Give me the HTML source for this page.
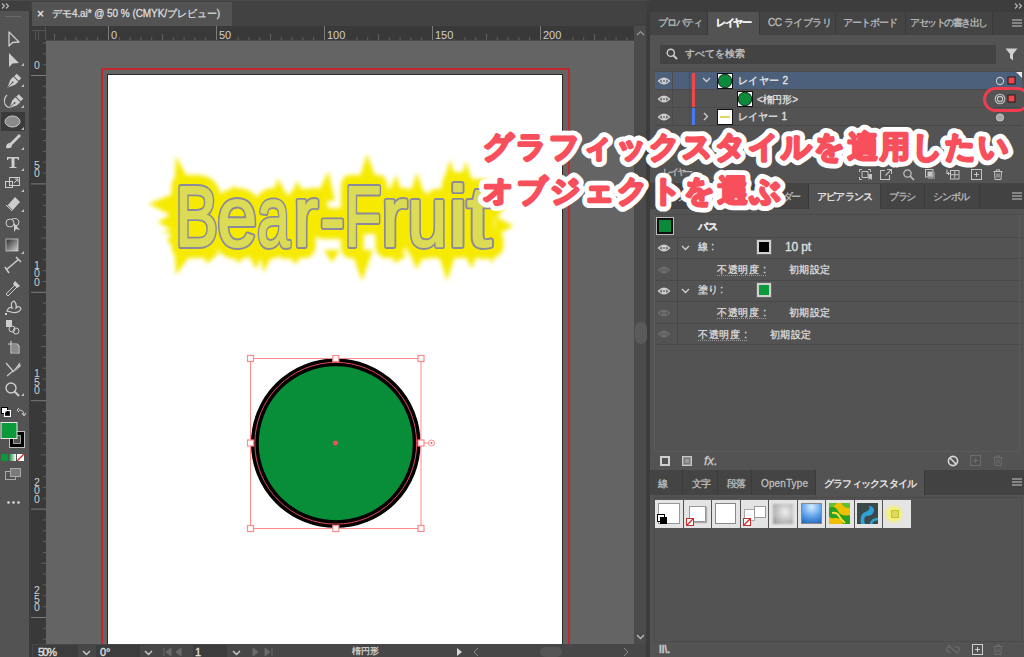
<!DOCTYPE html><html lang="ja"><head><meta charset="utf-8"><style>
*{margin:0;padding:0;box-sizing:border-box}
html,body{width:1024px;height:657px;overflow:hidden;background:#535353;font-family:"Liberation Sans",sans-serif;color:#d8d8d8}
.a{position:absolute}
.t{position:absolute;white-space:nowrap;font-size:11px;line-height:12px;-webkit-text-stroke:0.3px currentColor}
</style></head><body>
<div class="a" style="left:0;top:0;width:1024px;height:12px;background:#3f3f3f"></div>
<div class="a" style="left:0;top:0;width:1024px;height:1px;background:#4a4a4a"></div>
<div class="a" style="left:30px;top:1px;width:616px;height:25px;background:#424242"></div>
<div class="a" style="left:32px;top:2px;width:200px;height:24px;background:#535353"></div>
<div class="t" style="left:37px;top:7px;font-size:12px;line-height:14px;color:#e8e8e8">&#215;</div>
<div class="t" style="left:52px;top:8px;font-size:10px;line-height:12px;color:#dcdcdc;letter-spacing:-0.06px">デモ4.ai* @ 50 % (CMYK/プレビュー)</div>
<div class="a" style="left:0;top:11px;width:29px;height:646px;background:#535353"></div>
<div class="a" style="left:29px;top:11px;width:3px;height:646px;background:#3a3a3a"></div>
<svg class="a" style="left:0;top:0" width="30" height="657" viewBox="0 0 30 657"><path d="M5 16.5H21" stroke="#6a6a6a" stroke-width="1"/><rect x="1" y="112" width="24" height="19" fill="#3a3a3a"/><path d="M9 32L9 46L12.5 42.5L19 42Z" fill="none" stroke="#cdcdcd" stroke-width="1.3" stroke-linejoin="round"/><path d="M9 53L9 67L12.5 63.5L19 63Z" fill="#cdcdcd"/><g transform="translate(13,82) rotate(45)"><rect x="-3.2" y="-8.5" width="6.4" height="3.6" fill="#cdcdcd"/><path d="M-3.6 -4L3.6 -4L3.4 0.5L0 8L-3.4 0.5Z" fill="#cdcdcd"/><path d="M0 0.5V7.5" stroke="#535353" stroke-width="0.9"/><circle cx="0" cy="0.5" r="0.9" fill="#535353"/></g><g transform="translate(15,102.5) rotate(45)"><rect x="-3.2" y="-8.5" width="6.4" height="3.6" fill="#cdcdcd"/><path d="M-3.6 -4L3.6 -4L3.4 0.5L0 8L-3.4 0.5Z" fill="#cdcdcd"/><path d="M0 0.5V7.5" stroke="#535353" stroke-width="0.9"/><circle cx="0" cy="0.5" r="0.9" fill="#535353"/></g><path d="M7 95Q3 99 5 104Q7 108 10 107" fill="none" stroke="#cdcdcd" stroke-width="1.1"/><ellipse cx="12.5" cy="121.5" rx="7.5" ry="5.5" fill="#8a8a8a" stroke="#cdcdcd" stroke-width="1"/><path d="M6 148Q6 143 10 143L19 134L21 136L12 145Q12 149 6 148Z" fill="#cdcdcd"/><path d="M7 157H19V160H18L17.5 158.5H14.5V167H16.5V168H9.5V167H11.5V158.5H8.5L8 160H7Z" fill="#cdcdcd"/><rect x="5.5" y="181.5" width="7" height="6" fill="none" stroke="#cdcdcd"/><rect x="9.5" y="177.5" width="10" height="8" fill="none" stroke="#cdcdcd"/><path d="M15 179H18V182M18 179L14 183" fill="none" stroke="#cdcdcd"/><path d="M7 206L15 197L20 202L12 211Z" fill="#cdcdcd"/><path d="M7 206L12 211" stroke="#535353" stroke-width="2"/><path d="M6 205L12 211" stroke="#cdcdcd" stroke-width="1"/><circle cx="10" cy="223" r="4" fill="none" stroke="#cdcdcd"/><path d="M12 219Q18 217 19 222Q19 226 15 226" fill="none" stroke="#cdcdcd"/><path d="M14 223L20 230L16 229L14 232Z" fill="#cdcdcd"/><defs><linearGradient id="tg" x1="0" y1="0" x2="1" y2="1"><stop offset="0" stop-color="#2a2a2a"/><stop offset="1" stop-color="#cfcfcf"/></linearGradient></defs><rect x="6" y="239" width="12" height="12" fill="url(#tg)" stroke="#cdcdcd" stroke-width="0.8"/><path d="M6 270L19 259M5 267L9 273M16 257L21 262" stroke="#cdcdcd" stroke-width="1.5"/><path d="M6 294L15 285L17 287L8 296Z" fill="none" stroke="#cdcdcd"/><path d="M15 281L20 286L17 288L13 284Z" fill="#cdcdcd"/><path d="M7 311Q9 306 12 308Q10 302 14 301Q17 304 16 308Q20 305 21 309Q18 314 11 312Z" fill="none" stroke="#cdcdcd" stroke-width="1.2"/><path d="M5 313h2v2h-2z" fill="#cdcdcd"/><rect x="6" y="320" width="6" height="7" fill="#cdcdcd"/><circle cx="12" cy="329" r="3" fill="none" stroke="#cdcdcd"/><circle cx="16" cy="331" r="3" fill="none" stroke="#cdcdcd"/><path d="M11 341V353H19V346L17 344H11M8 344H14" fill="none" stroke="#cdcdcd" stroke-width="1.2"/><rect x="12" y="345" width="6" height="7" fill="#8a8a8a"/><path d="M6 363L13 371L7 376M20 363L13 372" fill="none" stroke="#cdcdcd" stroke-width="1.2"/><path d="M14 372L20 364L21 366Z" fill="#cdcdcd"/><circle cx="11" cy="388" r="5" fill="none" stroke="#cdcdcd" stroke-width="1.4"/><path d="M14.5 391.5L19 396" stroke="#cdcdcd" stroke-width="2"/><path d="M24 66H21L24 63Z" fill="#bdbdbd"/><path d="M24 87H21L24 84Z" fill="#bdbdbd"/><path d="M24 108H21L24 105Z" fill="#bdbdbd"/><path d="M24 130H21L24 127Z" fill="#bdbdbd"/><path d="M24 150H21L24 147Z" fill="#bdbdbd"/><path d="M24 171H21L24 168Z" fill="#bdbdbd"/><path d="M24 192H21L24 189Z" fill="#bdbdbd"/><path d="M24 212H21L24 209Z" fill="#bdbdbd"/><path d="M24 254H21L24 251Z" fill="#bdbdbd"/><path d="M24 396H21L24 393Z" fill="#bdbdbd"/><rect x="1.5" y="407.5" width="6" height="6" fill="#fff" stroke="#000"/><rect x="4.5" y="410.5" width="6" height="6" fill="none" stroke="#fff"/><rect x="5.5" y="411.5" width="4" height="4" fill="#000"/><path d="M19 410Q24 410 24 415M22 413L24 416L26 413M19 408L17 410L19 412" fill="none" stroke="#cdcdcd" stroke-width="1"/><rect x="9.5" y="431.5" width="15" height="16" fill="#000" stroke="#bdbdbd"/><rect x="13.5" y="435.5" width="7" height="8" fill="#535353" stroke="#bdbdbd" stroke-width="0.8"/><rect x="1" y="422.5" width="16" height="16" fill="#0a9a3a" stroke="#e8e8e8"/><rect x="1" y="454" width="7" height="7" fill="#0a9a3a"/><defs><linearGradient id="tg2"><stop offset="0" stop-color="#0a8a3a"/><stop offset="1" stop-color="#fff"/></linearGradient></defs><rect x="9" y="454" width="7" height="7" fill="url(#tg2)"/><rect x="17" y="454" width="7" height="7" fill="#fff"/><path d="M17 461L24 454" stroke="#e02020" stroke-width="1.3"/><rect x="5.5" y="471.5" width="10" height="8" fill="none" stroke="#aaa"/><rect x="10.5" y="468.5" width="10" height="8" fill="#7a7a7a" stroke="#aaa"/><circle cx="8.5" cy="502.5" r="1.3" fill="#ddd"/><circle cx="13.5" cy="502.5" r="1.3" fill="#ddd"/><circle cx="18.5" cy="502.5" r="1.3" fill="#ddd"/></svg>
<div class="a" style="left:32px;top:26px;width:602px;height:14px;background:#393939"></div>
<div class="a" style="left:31px;top:26px;width:15px;height:618px;background:#393939"></div>
<div class="a" style="left:46px;top:40px;width:588px;height:604px;background:#646464"></div>
<div class="a" style="left:101px;top:68px;width:469px;height:590px;border:2px solid #c0282e;border-bottom:none"></div>
<div class="a" style="left:107px;top:74px;width:456px;height:590px;background:#fff;border:1px solid #2a2a2a;border-bottom:none"></div>
<svg class="a" style="left:0;top:0" width="1024" height="657" viewBox="0 0 1024 657"><defs><filter id="bl" x="-20%" y="-50%" width="140%" height="200%"><feGaussianBlur stdDeviation="2.1"/></filter></defs><g filter="url(#bl)" fill="#f6ea00"><g stroke="#f6ea00" stroke-width="24" stroke-linejoin="round"><text transform="translate(175.22,0) scale(0.755,1)" x="0" y="246.5" font-family="Liberation Sans" font-size="85">B</text><text transform="translate(217.16,0) scale(0.841,1)" x="0" y="246.5" font-family="Liberation Sans" font-size="85">e</text><text transform="translate(257.31,0) scale(0.688,1)" x="0" y="246.5" font-family="Liberation Sans" font-size="85">a</text><text transform="translate(293.36,0) scale(0.880,1)" x="0" y="246.5" font-family="Liberation Sans" font-size="85">r</text><text transform="translate(320.12,0) scale(0.880,1)" x="0" y="246.5" font-family="Liberation Sans" font-size="85">-</text><text transform="translate(344.44,0) scale(0.711,1)" x="0" y="246.5" font-family="Liberation Sans" font-size="85">F</text><text transform="translate(381.24,0) scale(0.920,1)" x="0" y="246.5" font-family="Liberation Sans" font-size="85">r</text><text transform="translate(407.48,0) scale(0.840,1)" x="0" y="246.5" font-family="Liberation Sans" font-size="85">u</text><text transform="translate(448.52,0) scale(0.992,1)" x="0" y="246.5" font-family="Liberation Sans" font-size="85">i</text><text transform="translate(467.04,0) scale(1.040,1)" x="0" y="246.5" font-family="Liberation Sans" font-size="85">t</text></g><path d="M195.7 192.5L175.8 155.9L174.3 197.5Z M175.5 193.0L148.6 203.8L174.5 217.0Z M175.0 212.0L157.8 222.0L175.0 232.0Z M175.4 229.4L166.5 241.4L180.6 246.6Z M174.5 241.8L175.8 274.9L195.5 248.2Z M200.3 247.6L206.6 263.8L219.7 252.4Z M247.0 252.5L256.1 269.2L263.0 251.5Z M259.0 251.2L263.7 272.7L273.0 252.8Z M286.0 252.0L295.0 264.6L304.0 252.0Z M243.0 200.0L234.0 185.1L225.0 200.0Z M289.0 199.1L277.7 178.2L271.0 200.9Z M306.0 199.5L296.9 180.4L290.0 200.5Z M334.9 201.2L328.4 171.2L315.1 198.8Z M381.0 191.6L366.9 154.1L355.0 192.4Z M404.0 200.4L396.1 174.7L386.0 199.6Z M426.0 200.0L417.0 172.4L408.0 200.0Z M460.0 192.0L450.0 159.8L440.0 192.0Z M475.0 192.0L466.0 160.9L457.0 192.0Z M493.9 217.8L505.8 206.6L490.1 202.2Z M495.0 236.0L513.4 226.0L495.0 216.0Z M482.0 243.9L492.3 263.7L498.0 242.1Z M324.0 250.0L332.0 262.6L340.0 250.0Z M351.0 250.0L362.0 281.1L373.0 250.0Z M408.0 250.0L417.0 269.6L426.0 250.0Z M437.0 250.0L447.0 281.1L457.0 250.0Z M190.0 226.0L161.2 232.0L190.0 238.0Z M392.8 248.4L394.2 263.5L407.2 255.6Z M462.1 251.0L472.3 268.4L477.9 249.0Z M232.2 250.4L237.7 263.5L247.8 253.6Z M358.0 200.0L350.0 182.8L342.0 200.0Z"/></g><g fill="#8a8a96" stroke="#8a8a9a" stroke-width="5.8" stroke-linejoin="round"><text transform="translate(175.22,0) scale(0.755,1)" x="0" y="246.5" font-family="Liberation Sans" font-size="85">B</text><text transform="translate(217.16,0) scale(0.841,1)" x="0" y="246.5" font-family="Liberation Sans" font-size="85">e</text><text transform="translate(257.31,0) scale(0.688,1)" x="0" y="246.5" font-family="Liberation Sans" font-size="85">a</text><text transform="translate(293.36,0) scale(0.880,1)" x="0" y="246.5" font-family="Liberation Sans" font-size="85">r</text><text transform="translate(320.12,0) scale(0.880,1)" x="0" y="246.5" font-family="Liberation Sans" font-size="85">-</text><text transform="translate(344.44,0) scale(0.711,1)" x="0" y="246.5" font-family="Liberation Sans" font-size="85">F</text><text transform="translate(381.24,0) scale(0.920,1)" x="0" y="246.5" font-family="Liberation Sans" font-size="85">r</text><text transform="translate(407.48,0) scale(0.840,1)" x="0" y="246.5" font-family="Liberation Sans" font-size="85">u</text><text transform="translate(448.52,0) scale(0.992,1)" x="0" y="246.5" font-family="Liberation Sans" font-size="85">i</text><text transform="translate(467.04,0) scale(1.040,1)" x="0" y="246.5" font-family="Liberation Sans" font-size="85">t</text></g><g fill="#dcdb55" stroke="#dcdb55" stroke-width="2.0" stroke-linejoin="round"><text transform="translate(175.22,0) scale(0.755,1)" x="0" y="246.5" font-family="Liberation Sans" font-size="85">B</text><text transform="translate(217.16,0) scale(0.841,1)" x="0" y="246.5" font-family="Liberation Sans" font-size="85">e</text><text transform="translate(257.31,0) scale(0.688,1)" x="0" y="246.5" font-family="Liberation Sans" font-size="85">a</text><text transform="translate(293.36,0) scale(0.880,1)" x="0" y="246.5" font-family="Liberation Sans" font-size="85">r</text><text transform="translate(320.12,0) scale(0.880,1)" x="0" y="246.5" font-family="Liberation Sans" font-size="85">-</text><text transform="translate(344.44,0) scale(0.711,1)" x="0" y="246.5" font-family="Liberation Sans" font-size="85">F</text><text transform="translate(381.24,0) scale(0.920,1)" x="0" y="246.5" font-family="Liberation Sans" font-size="85">r</text><text transform="translate(407.48,0) scale(0.840,1)" x="0" y="246.5" font-family="Liberation Sans" font-size="85">u</text><text transform="translate(448.52,0) scale(0.992,1)" x="0" y="246.5" font-family="Liberation Sans" font-size="85">i</text><text transform="translate(467.04,0) scale(1.040,1)" x="0" y="246.5" font-family="Liberation Sans" font-size="85">t</text></g><circle cx="335.75" cy="443.25" r="80.9" fill="#088e38" stroke="#000" stroke-width="7.8"/><circle cx="335.75" cy="443.25" r="80.9" fill="none" stroke="#e04a55" stroke-width="1"/><rect x="250.5" y="358.5" width="170.5" height="170" fill="none" stroke="#ff8a8a" stroke-width="1"/><circle cx="335.5" cy="443" r="2.5" fill="#f0505a"/><line x1="421" y1="443" x2="428" y2="443" stroke="#ff8a8a" stroke-width="1"/><circle cx="431.5" cy="443" r="3" fill="#fff" stroke="#ff8a8a" stroke-width="1"/><circle cx="431.5" cy="443" r="1" fill="#f0505a"/>
<rect x="247.5" y="355.5" width="6" height="6" fill="#fff" stroke="#ff8a8a" stroke-width="1.2"/>
<rect x="332.8" y="355.5" width="6" height="6" fill="#fff" stroke="#ff8a8a" stroke-width="1.2"/>
<rect x="418.0" y="355.5" width="6" height="6" fill="#fff" stroke="#ff8a8a" stroke-width="1.2"/>
<rect x="247.5" y="440.0" width="6" height="6" fill="#fff" stroke="#ff8a8a" stroke-width="1.2"/>
<rect x="418.0" y="440.0" width="6" height="6" fill="#fff" stroke="#ff8a8a" stroke-width="1.2"/>
<rect x="247.5" y="525.5" width="6" height="6" fill="#fff" stroke="#ff8a8a" stroke-width="1.2"/>
<rect x="332.8" y="525.5" width="6" height="6" fill="#fff" stroke="#ff8a8a" stroke-width="1.2"/>
<rect x="418.0" y="525.5" width="6" height="6" fill="#fff" stroke="#ff8a8a" stroke-width="1.2"/>
</svg>
<svg class="a" style="left:0;top:0" width="1024" height="657" viewBox="0 0 1024 657"><path d="M54.5 34V40" stroke="#606060" stroke-width="1"/><path d="M65.3 37V40" stroke="#606060" stroke-width="1"/><path d="M76.1 37V40" stroke="#606060" stroke-width="1"/><path d="M86.9 37V40" stroke="#606060" stroke-width="1"/><path d="M97.7 37V40" stroke="#606060" stroke-width="1"/><path d="M108.5 26V40" stroke="#7c7c7c" stroke-width="1"/><path d="M119.3 37V40" stroke="#606060" stroke-width="1"/><path d="M130.1 37V40" stroke="#606060" stroke-width="1"/><path d="M140.9 37V40" stroke="#606060" stroke-width="1"/><path d="M151.7 37V40" stroke="#606060" stroke-width="1"/><path d="M162.5 34V40" stroke="#606060" stroke-width="1"/><path d="M173.3 37V40" stroke="#606060" stroke-width="1"/><path d="M184.1 37V40" stroke="#606060" stroke-width="1"/><path d="M194.9 37V40" stroke="#606060" stroke-width="1"/><path d="M205.7 37V40" stroke="#606060" stroke-width="1"/><path d="M216.5 26V40" stroke="#7c7c7c" stroke-width="1"/><path d="M227.3 37V40" stroke="#606060" stroke-width="1"/><path d="M238.1 37V40" stroke="#606060" stroke-width="1"/><path d="M248.9 37V40" stroke="#606060" stroke-width="1"/><path d="M259.7 37V40" stroke="#606060" stroke-width="1"/><path d="M270.5 34V40" stroke="#606060" stroke-width="1"/><path d="M281.3 37V40" stroke="#606060" stroke-width="1"/><path d="M292.1 37V40" stroke="#606060" stroke-width="1"/><path d="M302.9 37V40" stroke="#606060" stroke-width="1"/><path d="M313.7 37V40" stroke="#606060" stroke-width="1"/><path d="M324.5 26V40" stroke="#7c7c7c" stroke-width="1"/><path d="M335.3 37V40" stroke="#606060" stroke-width="1"/><path d="M346.1 37V40" stroke="#606060" stroke-width="1"/><path d="M356.9 37V40" stroke="#606060" stroke-width="1"/><path d="M367.7 37V40" stroke="#606060" stroke-width="1"/><path d="M378.5 34V40" stroke="#606060" stroke-width="1"/><path d="M389.3 37V40" stroke="#606060" stroke-width="1"/><path d="M400.1 37V40" stroke="#606060" stroke-width="1"/><path d="M410.9 37V40" stroke="#606060" stroke-width="1"/><path d="M421.7 37V40" stroke="#606060" stroke-width="1"/><path d="M432.5 26V40" stroke="#7c7c7c" stroke-width="1"/><path d="M443.3 37V40" stroke="#606060" stroke-width="1"/><path d="M454.1 37V40" stroke="#606060" stroke-width="1"/><path d="M464.9 37V40" stroke="#606060" stroke-width="1"/><path d="M475.7 37V40" stroke="#606060" stroke-width="1"/><path d="M486.5 34V40" stroke="#606060" stroke-width="1"/><path d="M497.3 37V40" stroke="#606060" stroke-width="1"/><path d="M508.1 37V40" stroke="#606060" stroke-width="1"/><path d="M518.9 37V40" stroke="#606060" stroke-width="1"/><path d="M529.7 37V40" stroke="#606060" stroke-width="1"/><path d="M540.5 26V40" stroke="#7c7c7c" stroke-width="1"/><path d="M551.3 37V40" stroke="#606060" stroke-width="1"/><path d="M562.1 37V40" stroke="#606060" stroke-width="1"/><path d="M572.9 37V40" stroke="#606060" stroke-width="1"/><path d="M583.7 37V40" stroke="#606060" stroke-width="1"/><path d="M594.5 34V40" stroke="#606060" stroke-width="1"/><path d="M605.3 37V40" stroke="#606060" stroke-width="1"/><path d="M616.1 37V40" stroke="#606060" stroke-width="1"/><path d="M626.9 37V40" stroke="#606060" stroke-width="1"/><rect x="109.5" y="28" width="9" height="11" fill="#393939"/><text x="111.0" y="39" font-size="11" fill="#cfcfcf" font-family="Liberation Sans">0</text><rect x="217.5" y="28" width="16" height="11" fill="#393939"/><text x="219.0" y="39" font-size="11" fill="#cfcfcf" font-family="Liberation Sans">50</text><rect x="325.5" y="28" width="23" height="11" fill="#393939"/><text x="327.0" y="39" font-size="11" fill="#cfcfcf" font-family="Liberation Sans">100</text><rect x="433.5" y="28" width="23" height="11" fill="#393939"/><text x="435.0" y="39" font-size="11" fill="#cfcfcf" font-family="Liberation Sans">150</text><rect x="541.5" y="28" width="23" height="11" fill="#393939"/><text x="543.0" y="39" font-size="11" fill="#cfcfcf" font-family="Liberation Sans">200</text><path d="M43 43.0H46" stroke="#606060" stroke-width="1"/><path d="M43 53.8H46" stroke="#606060" stroke-width="1"/><path d="M43 64.7H46" stroke="#606060" stroke-width="1"/><path d="M31 75.5H46" stroke="#7c7c7c" stroke-width="1"/><path d="M43 86.3H46" stroke="#606060" stroke-width="1"/><path d="M43 97.2H46" stroke="#606060" stroke-width="1"/><path d="M43 108.0H46" stroke="#606060" stroke-width="1"/><path d="M43 118.9H46" stroke="#606060" stroke-width="1"/><path d="M41 129.7H46" stroke="#606060" stroke-width="1"/><path d="M43 140.5H46" stroke="#606060" stroke-width="1"/><path d="M43 151.4H46" stroke="#606060" stroke-width="1"/><path d="M43 162.2H46" stroke="#606060" stroke-width="1"/><path d="M43 173.1H46" stroke="#606060" stroke-width="1"/><path d="M31 183.9H46" stroke="#7c7c7c" stroke-width="1"/><path d="M43 194.7H46" stroke="#606060" stroke-width="1"/><path d="M43 205.6H46" stroke="#606060" stroke-width="1"/><path d="M43 216.4H46" stroke="#606060" stroke-width="1"/><path d="M43 227.3H46" stroke="#606060" stroke-width="1"/><path d="M41 238.1H46" stroke="#606060" stroke-width="1"/><path d="M43 248.9H46" stroke="#606060" stroke-width="1"/><path d="M43 259.8H46" stroke="#606060" stroke-width="1"/><path d="M43 270.6H46" stroke="#606060" stroke-width="1"/><path d="M43 281.5H46" stroke="#606060" stroke-width="1"/><path d="M31 292.3H46" stroke="#7c7c7c" stroke-width="1"/><path d="M43 303.1H46" stroke="#606060" stroke-width="1"/><path d="M43 314.0H46" stroke="#606060" stroke-width="1"/><path d="M43 324.8H46" stroke="#606060" stroke-width="1"/><path d="M43 335.7H46" stroke="#606060" stroke-width="1"/><path d="M41 346.5H46" stroke="#606060" stroke-width="1"/><path d="M43 357.3H46" stroke="#606060" stroke-width="1"/><path d="M43 368.2H46" stroke="#606060" stroke-width="1"/><path d="M43 379.0H46" stroke="#606060" stroke-width="1"/><path d="M43 389.9H46" stroke="#606060" stroke-width="1"/><path d="M31 400.7H46" stroke="#7c7c7c" stroke-width="1"/><path d="M43 411.5H46" stroke="#606060" stroke-width="1"/><path d="M43 422.4H46" stroke="#606060" stroke-width="1"/><path d="M43 433.2H46" stroke="#606060" stroke-width="1"/><path d="M43 444.1H46" stroke="#606060" stroke-width="1"/><path d="M41 454.9H46" stroke="#606060" stroke-width="1"/><path d="M43 465.7H46" stroke="#606060" stroke-width="1"/><path d="M43 476.6H46" stroke="#606060" stroke-width="1"/><path d="M43 487.4H46" stroke="#606060" stroke-width="1"/><path d="M43 498.3H46" stroke="#606060" stroke-width="1"/><path d="M31 509.1H46" stroke="#7c7c7c" stroke-width="1"/><path d="M43 519.9H46" stroke="#606060" stroke-width="1"/><path d="M43 530.8H46" stroke="#606060" stroke-width="1"/><path d="M43 541.6H46" stroke="#606060" stroke-width="1"/><path d="M43 552.5H46" stroke="#606060" stroke-width="1"/><path d="M41 563.3H46" stroke="#606060" stroke-width="1"/><path d="M43 574.1H46" stroke="#606060" stroke-width="1"/><path d="M43 585.0H46" stroke="#606060" stroke-width="1"/><path d="M43 595.8H46" stroke="#606060" stroke-width="1"/><path d="M43 606.7H46" stroke="#606060" stroke-width="1"/><path d="M31 617.5H46" stroke="#7c7c7c" stroke-width="1"/><path d="M43 628.3H46" stroke="#606060" stroke-width="1"/><path d="M43 639.2H46" stroke="#606060" stroke-width="1"/><rect x="33" y="60.0" width="8" height="10.5" fill="#393939"/><text x="34" y="69.0" font-size="10.5" fill="#cfcfcf" font-family="Liberation Sans">0</text><rect x="33" y="159.9" width="8" height="19.0" fill="#393939"/><text x="34" y="168.9" font-size="10.5" fill="#cfcfcf" font-family="Liberation Sans">5</text><text x="34" y="177.4" font-size="10.5" fill="#cfcfcf" font-family="Liberation Sans">0</text><rect x="33" y="259.8" width="8" height="27.5" fill="#393939"/><text x="34" y="268.8" font-size="10.5" fill="#cfcfcf" font-family="Liberation Sans">1</text><text x="34" y="277.3" font-size="10.5" fill="#cfcfcf" font-family="Liberation Sans">0</text><text x="34" y="285.8" font-size="10.5" fill="#cfcfcf" font-family="Liberation Sans">0</text><rect x="33" y="368.2" width="8" height="27.5" fill="#393939"/><text x="34" y="377.2" font-size="10.5" fill="#cfcfcf" font-family="Liberation Sans">1</text><text x="34" y="385.7" font-size="10.5" fill="#cfcfcf" font-family="Liberation Sans">5</text><text x="34" y="394.2" font-size="10.5" fill="#cfcfcf" font-family="Liberation Sans">0</text><rect x="33" y="476.6" width="8" height="27.5" fill="#393939"/><text x="34" y="485.6" font-size="10.5" fill="#cfcfcf" font-family="Liberation Sans">2</text><text x="34" y="494.1" font-size="10.5" fill="#cfcfcf" font-family="Liberation Sans">0</text><text x="34" y="502.6" font-size="10.5" fill="#cfcfcf" font-family="Liberation Sans">0</text><rect x="33" y="585.0" width="8" height="27.5" fill="#393939"/><text x="34" y="594.0" font-size="10.5" fill="#cfcfcf" font-family="Liberation Sans">2</text><text x="34" y="602.5" font-size="10.5" fill="#cfcfcf" font-family="Liberation Sans">5</text><text x="34" y="611.0" font-size="10.5" fill="#cfcfcf" font-family="Liberation Sans">0</text><path d="M46 40.5H634" stroke="#4a4a4a"/><path d="M32 30.5H45M45.5 27V40M35.5 31V40M38.5 31V40" stroke="#555"/></svg>
<div class="a" style="left:634px;top:26px;width:14px;height:618px;background:#4b4b4b"></div>
<div class="a" style="left:646px;top:11px;width:4px;height:646px;background:#3c3c3c"></div>
<div class="a" style="left:32px;top:644px;width:614px;height:13px;background:#474747"></div>
<div class="a" style="left:33px;top:645px;width:45px;height:12px;background:#3c3c3c"></div>
<div class="t" style="left:38px;top:646px;font-size:11px;line-height:13px;color:#e0e0e0;letter-spacing:-1.52px">50%</div>
<div class="a" style="left:96px;top:645px;width:44px;height:12px;background:#3c3c3c"></div>
<div class="t" style="left:100px;top:646px;font-size:11px;line-height:13px;color:#e0e0e0">0°</div>
<div class="a" style="left:193px;top:645px;width:34px;height:12px;background:#3c3c3c"></div>
<div class="t" style="left:195px;top:646px;font-size:11px;line-height:13px;color:#e0e0e0">1</div>
<svg class="a" style="left:82px;top:650px" width="9" height="6" viewBox="0 0 9 6"><path d="M1 1L4.5 4.5L8 1" fill="none" stroke="#d0d0d0" stroke-width="1.3"/></svg>
<svg class="a" style="left:144px;top:650px" width="9" height="6" viewBox="0 0 9 6"><path d="M1 1L4.5 4.5L8 1" fill="none" stroke="#d0d0d0" stroke-width="1.3"/></svg>
<svg class="a" style="left:232px;top:650px" width="9" height="6" viewBox="0 0 9 6"><path d="M1 1L4.5 4.5L8 1" fill="none" stroke="#d0d0d0" stroke-width="1.3"/></svg>
<svg class="a" style="left:636px;top:634px" width="9" height="6" viewBox="0 0 9 6"><path d="M1 1L4.5 4.5L8 1" fill="none" stroke="#bbb" stroke-width="1.3"/></svg>
<svg class="a" style="left:160px;top:647px" width="120" height="10" viewBox="0 0 120 10"><path d="M4 1V9M11 1L6 5L11 9Z M21 1L16 5L21 9Z" fill="#6a6a6a" stroke="#6a6a6a" stroke-width="1"/><path d="M93 1L98 5L93 9Z M105 1L110 5L105 9ZM112 1V9" fill="#6a6a6a" stroke="#6a6a6a" stroke-width="1"/></svg>
<div class="t" style="left:352px;top:646px;font-size:9px;line-height:11px;color:#cfcfcf">楕円形</div>
<svg class="a" style="left:456px;top:647px" width="40" height="10" viewBox="0 0 40 10"><path d="M1 1L6 5L1 9Z" fill="#d8d8d8"/><path d="M22 1L18 5L22 9" fill="none" stroke="#888" stroke-width="1"/></svg>
<div class="a" style="left:540px;top:647px;width:22px;height:10px;background:#555;border-radius:5px"></div>
<svg class="a" style="left:622px;top:647px" width="10" height="10" viewBox="0 0 10 10"><path d="M2 1L6 5L2 9" fill="none" stroke="#888" stroke-width="1"/></svg>
<svg class="a" style="left:636px;top:30px" width="9" height="6" viewBox="0 0 9 6"><path d="M1 5L4.5 1.5L8 5" fill="none" stroke="#999" stroke-width="1.2"/></svg>
<div class="a" style="left:635px;top:322px;width:12px;height:22px;background:#5a5a5a;border-radius:6px"></div>
<div class="a" style="left:650px;top:11px;width:374px;height:646px;background:#535353"></div>
<div class="a" style="left:650px;top:0;width:374px;height:12px;background:#3d3d3d"></div>
<svg class="a" style="left:1014px;top:3px" width="9" height="6" viewBox="0 0 9 6"><path d="M1 0.5L3.5 3L1 5.5M5 0.5L7.5 3L5 5.5" fill="none" stroke="#bbb" stroke-width="1.1"/></svg>
<svg class="a" style="left:1px;top:3px" width="9" height="6" viewBox="0 0 9 6"><path d="M1 0.5L3.5 3L1 5.5M5 0.5L7.5 3L5 5.5" fill="none" stroke="#bbb" stroke-width="1.1"/></svg>
<div class="a" style="left:650px;top:12px;width:374px;height:23px;background:#424242"></div>
<div class="a" style="left:651px;top:12px;width:57px;height:23px;background:#444444;border-right:1px solid #3a3a3a"></div>
<div class="t" style="left:658px;top:17px;font-size:10px;line-height:12px;color:#bdbdbd;letter-spacing:-1.25px">プロパティ</div>
<div class="a" style="left:708px;top:12px;width:52px;height:23px;background:#535353;border-right:1px solid #3a3a3a"></div>
<div class="t" style="left:716px;top:17px;font-size:10px;line-height:12px;color:#f0f0f0;font-weight:bold;letter-spacing:-1.33px">レイヤー</div>
<div class="a" style="left:760px;top:12px;width:76px;height:23px;background:#444444;border-right:1px solid #3a3a3a"></div>
<div class="t" style="left:768px;top:17px;font-size:10px;line-height:12px;color:#bdbdbd;letter-spacing:-0.46px">CC ライブラリ</div>
<div class="a" style="left:836px;top:12px;width:70px;height:23px;background:#444444;border-right:1px solid #3a3a3a"></div>
<div class="t" style="left:843px;top:17px;font-size:10px;line-height:12px;color:#bdbdbd;letter-spacing:-1.00px">アートボード</div>
<div class="a" style="left:906px;top:12px;width:87px;height:23px;background:#444444;border-right:1px solid #3a3a3a"></div>
<div class="t" style="left:910px;top:17px;font-size:10px;line-height:12px;color:#bdbdbd;letter-spacing:-1.50px">アセットの書き出し</div>
<svg class="a" style="left:1012px;top:19px" width="10" height="8" viewBox="0 0 10 8"><path d="M0 1H10M0 4H10M0 7H10" stroke="#c8c8c8" stroke-width="1.2"/></svg>
<div class="a" style="left:660px;top:45px;width:336px;height:19px;background:#434343;border-radius:2px"></div>
<svg class="a" style="left:666px;top:48px" width="12" height="12" viewBox="0 0 12 12"><circle cx="4.8" cy="4.8" r="3.6" fill="none" stroke="#cfcfcf" stroke-width="1.4"/><path d="M7.5 7.5L11 11" stroke="#cfcfcf" stroke-width="1.8"/></svg>
<div class="t" style="left:685px;top:48px;font-size:10px;line-height:12px;color:#c4c4c4">すべてを検索</div>
<svg class="a" style="left:1005px;top:48px" width="13" height="13" viewBox="0 0 13 13"><path d="M0.5 0.5H12.5L8 6V12.5L5 10V6Z" fill="#d0d0d0"/></svg>
<div class="a" style="left:654px;top:71px;width:368px;height:88px;background:#535353;border-top:1px solid #4a4a4a"></div>
<div class="a" style="left:655px;top:72px;width:367px;height:17px;background:#4c5f7b"></div>
<div class="a" style="left:655px;top:89px;width:367px;height:1px;background:#4a4a4a"></div>
<div class="a" style="left:672px;top:72px;width:1px;height:17px;background:#4c4c4c"></div>
<div class="a" style="left:689px;top:72px;width:1px;height:17px;background:#4c4c4c"></div>
<svg class="a" style="left:657px;top:76px" width="14" height="10" viewBox="0 0 14 10"><path d="M1.5 5 Q7 -0.5 12.5 5 Q7 10.5 1.5 5 Z" fill="none" stroke="#cfcfcf" stroke-width="1.3"/><circle cx="7" cy="5" r="2.4" fill="#cfcfcf"/><circle cx="7" cy="5" r="0.9" fill="#666"/></svg>
<div class="a" style="left:655px;top:90px;width:367px;height:17px;background:#535353"></div>
<div class="a" style="left:655px;top:107px;width:367px;height:1px;background:#4a4a4a"></div>
<div class="a" style="left:672px;top:90px;width:1px;height:17px;background:#4c4c4c"></div>
<div class="a" style="left:689px;top:90px;width:1px;height:17px;background:#4c4c4c"></div>
<svg class="a" style="left:657px;top:94px" width="14" height="10" viewBox="0 0 14 10"><path d="M1.5 5 Q7 -0.5 12.5 5 Q7 10.5 1.5 5 Z" fill="none" stroke="#cfcfcf" stroke-width="1.3"/><circle cx="7" cy="5" r="2.4" fill="#cfcfcf"/><circle cx="7" cy="5" r="0.9" fill="#666"/></svg>
<div class="a" style="left:655px;top:108px;width:367px;height:17px;background:#535353"></div>
<div class="a" style="left:655px;top:125px;width:367px;height:1px;background:#4a4a4a"></div>
<div class="a" style="left:672px;top:108px;width:1px;height:17px;background:#4c4c4c"></div>
<div class="a" style="left:689px;top:108px;width:1px;height:17px;background:#4c4c4c"></div>
<svg class="a" style="left:657px;top:112px" width="14" height="10" viewBox="0 0 14 10"><path d="M1.5 5 Q7 -0.5 12.5 5 Q7 10.5 1.5 5 Z" fill="none" stroke="#cfcfcf" stroke-width="1.3"/><circle cx="7" cy="5" r="2.4" fill="#cfcfcf"/><circle cx="7" cy="5" r="0.9" fill="#666"/></svg>
<div class="a" style="left:655px;top:125px;width:367px;height:1px;background:#474747"></div>
<div class="a" style="left:692px;top:73px;width:3px;height:34px;background:#ee4848"></div>
<div class="a" style="left:692px;top:108px;width:3px;height:17px;background:#4a78ee"></div>
<svg class="a" style="left:702px;top:77px" width="9" height="6" viewBox="0 0 9 6"><path d="M1 1L4.5 4.5L8 1" fill="none" stroke="#d0d0d0" stroke-width="1.3"/></svg>
<svg class="a" style="left:703px;top:112px" width="6" height="9" viewBox="0 0 6 9"><path d="M1 1L4.5 4.5L1 8" fill="none" stroke="#d0d0d0" stroke-width="1.3"/></svg>
<svg class="a" style="left:717px;top:73px" width="16" height="16" viewBox="0 0 16 16"><rect x="0.5" y="0.5" width="15" height="15" fill="#fff" stroke="#111"/><circle cx="8" cy="8" r="6.8" fill="#0a8a3a" stroke="#000" stroke-width="0.8"/></svg>
<svg class="a" style="left:737px;top:91px" width="16" height="16" viewBox="0 0 16 16"><rect x="0.5" y="0.5" width="15" height="15" fill="#fff" stroke="#111"/><circle cx="8" cy="8" r="6.8" fill="#0a8a3a" stroke="#000" stroke-width="0.8"/></svg>
<svg class="a" style="left:717px;top:109px" width="16" height="16" viewBox="0 0 16 16"><rect x="0.5" y="0.5" width="15" height="15" fill="#fff" stroke="#111"/><rect x="3" y="7" width="10" height="2" fill="#e0d860"/></svg>
<div class="t" style="left:738px;top:75px;font-size:10px;line-height:12px;color:#e8e8e8;letter-spacing:0.33px">レイヤー 2</div>
<div class="t" style="left:757px;top:94px;font-size:10px;line-height:12px;color:#e0e0e0;letter-spacing:-0.17px">&lt;楕円形&gt;</div>
<div class="t" style="left:738px;top:111px;font-size:10px;line-height:12px;color:#e0e0e0;letter-spacing:0.13px">レイヤー 1</div>
<svg class="a" style="left:990px;top:72px" width="30" height="54" viewBox="0 0 30 54"><circle cx="10" cy="9" r="3.6" fill="none" stroke="#c8c8c8" stroke-width="1.1"/><rect x="18" y="5" width="7" height="7" fill="#f04848" stroke="#1a1a1a" stroke-width="1"/><circle cx="10" cy="27" r="4.8" fill="none" stroke="#c8c8c8" stroke-width="1.1"/><circle cx="10" cy="27" r="2.6" fill="none" stroke="#c8c8c8" stroke-width="1.1"/><rect x="18" y="23" width="7" height="7" fill="#f04848" stroke="#1a1a1a" stroke-width="1"/><circle cx="10" cy="45.5" r="3.6" fill="#a8a8a8" stroke="#c8c8c8" stroke-width="1"/></svg>
<svg class="a" style="left:1016px;top:72px" width="6" height="6" viewBox="0 0 6 6"><path d="M0 0H6V6Z" fill="#e8e8e8"/></svg>
<svg class="a" style="left:980px;top:85px" width="44" height="30" viewBox="0 0 44 30"><rect x="4.5" y="3.5" width="44" height="22" rx="11" fill="none" stroke="#f03c4e" stroke-width="3"/></svg>
<div class="t" style="left:663px;top:167px;font-size:9px;line-height:11px;color:#bdbdbd;letter-spacing:-2.00px">レイヤー</div>
<svg class="a" style="left:859px;top:169px" width="14" height="11" viewBox="0 0 14 11"><path d="M0.5 3V0.5H3M9 0.5H11.5V3M0.5 8V10.5H3M3 2.5V8.5H9V2.5Z" fill="none" stroke="#c4c4c4"/><path d="M9.5 5H13V11L11.2 9.5L9.5 11Z" fill="#c4c4c4"/></svg>
<svg class="a" style="left:880px;top:169px" width="12" height="11" viewBox="0 0 12 11"><path d="M5 1.5H0.5V10.5H9.5V6M7 0.5H11.5V5M11.5 0.5L5.5 6.5" fill="none" stroke="#c4c4c4" stroke-width="1.1"/></svg>
<svg class="a" style="left:903px;top:169px" width="12" height="12" viewBox="0 0 12 12"><circle cx="4.5" cy="4.5" r="3.7" fill="none" stroke="#c4c4c4" stroke-width="1.2"/><path d="M7.3 7.3L11 11" stroke="#c4c4c4" stroke-width="1.6"/></svg>
<svg class="a" style="left:925px;top:169px" width="11" height="11" viewBox="0 0 11 11"><rect x="0.5" y="0.5" width="7.5" height="7.5" fill="none" stroke="#c4c4c4"/><rect x="2.5" y="2.5" width="5" height="5" fill="#c4c4c4"/><path d="M9.5 3V9.5H3" fill="none" stroke="#8a8a8a"/></svg>
<svg class="a" style="left:946px;top:169px" width="14" height="11" viewBox="0 0 14 11"><path d="M0.5 4.5H3.5M2 3L3.5 4.5L2 6M1 0.5V4.5" fill="none" stroke="#c4c4c4"/><rect x="4.5" y="1.5" width="8.5" height="8.5" fill="none" stroke="#c4c4c4"/><path d="M8.75 2V9.5M5 5.75H12.5" stroke="#c4c4c4"/></svg>
<svg class="a" style="left:971px;top:169px" width="11" height="11" viewBox="0 0 11 11"><rect x="0.5" y="0.5" width="10" height="10" fill="none" stroke="#c4c4c4"/><path d="M5.5 3V8M3 5.5H8" stroke="#c4c4c4"/></svg>
<svg class="a" style="left:993px;top:169px" width="10" height="11" viewBox="0 0 10 11"><path d="M0.5 2.5H9.5M3.5 2.5V0.8H6.5V2.5M1.5 2.5L2 10.5H8L8.5 2.5M4 4.5V8.5M6 4.5V8.5" fill="none" stroke="#c4c4c4" stroke-width="1"/></svg>
<div class="a" style="left:650px;top:183px;width:374px;height:1px;background:#444"></div>
<div class="a" style="left:650px;top:184px;width:374px;height:25px;background:#424242"></div>
<div class="a" style="left:651px;top:184px;width:74px;height:25px;background:#444444;border-right:1px solid #3a3a3a"></div>
<div class="t" style="left:660px;top:191px;font-size:10px;line-height:12px;color:#bdbdbd;letter-spacing:-1.67px">グラデーション</div>
<div class="a" style="left:725px;top:184px;width:84px;height:25px;background:#444444;border-right:1px solid #3a3a3a"></div>
<div class="t" style="left:733px;top:191px;font-size:10px;line-height:12px;color:#bdbdbd;letter-spacing:-1.71px">パスファインダー</div>
<div class="a" style="left:809px;top:184px;width:72px;height:25px;background:#535353;border-right:1px solid #3a3a3a"></div>
<div class="t" style="left:817px;top:191px;font-size:10px;line-height:12px;color:#f0f0f0;letter-spacing:-0.80px">アピアランス</div>
<div class="a" style="left:881px;top:184px;width:44px;height:25px;background:#444444;border-right:1px solid #3a3a3a"></div>
<div class="t" style="left:889px;top:191px;font-size:10px;line-height:12px;color:#bdbdbd;letter-spacing:-1.50px">ブラシ</div>
<div class="a" style="left:925px;top:184px;width:55px;height:25px;background:#444444;border-right:1px solid #3a3a3a"></div>
<div class="t" style="left:933px;top:191px;font-size:10px;line-height:12px;color:#bdbdbd;letter-spacing:-1.00px">シンボル</div>
<svg class="a" style="left:1012px;top:192px" width="10" height="8" viewBox="0 0 10 8"><path d="M0 1H10M0 4H10M0 7H10" stroke="#c8c8c8" stroke-width="1.2"/></svg>
<div class="a" style="left:654px;top:214px;width:368px;height:238px;border-top:1px solid #4a4a4a"></div>
<div class="a" style="left:654px;top:237px;width:368px;height:1px;background:#494949"></div>
<div class="a" style="left:654px;top:258px;width:368px;height:1px;background:#494949"></div>
<div class="a" style="left:654px;top:280px;width:368px;height:1px;background:#494949"></div>
<div class="a" style="left:654px;top:301px;width:368px;height:1px;background:#494949"></div>
<div class="a" style="left:654px;top:323px;width:368px;height:1px;background:#494949"></div>
<div class="a" style="left:654px;top:344px;width:368px;height:1px;background:#494949"></div>
<div class="a" style="left:677px;top:237px;width:1px;height:107px;background:#474747"></div>
<div class="a" style="left:657px;top:218px;width:16px;height:16px;background:#0a8a3a;border:2px solid #111;outline:1px solid #bbb"></div>
<div class="t" style="left:698px;top:221px;font-size:10px;line-height:12px;color:#e8e8e8;font-weight:bold">パス</div>
<svg class="a" style="left:657px;top:243px" width="14" height="10" viewBox="0 0 14 10"><path d="M1.5 5 Q7 -0.5 12.5 5 Q7 10.5 1.5 5 Z" fill="none" stroke="#cfcfcf" stroke-width="1.3"/><circle cx="7" cy="5" r="2.4" fill="#cfcfcf"/><circle cx="7" cy="5" r="0.9" fill="#666"/></svg>
<svg class="a" style="left:657px;top:286px" width="14" height="10" viewBox="0 0 14 10"><path d="M1.5 5 Q7 -0.5 12.5 5 Q7 10.5 1.5 5 Z" fill="none" stroke="#cfcfcf" stroke-width="1.3"/><circle cx="7" cy="5" r="2.4" fill="#cfcfcf"/><circle cx="7" cy="5" r="0.9" fill="#666"/></svg>
<svg class="a" style="left:657px;top:265px" width="14" height="10" viewBox="0 0 14 10"><path d="M1.5 5 Q7 -0.5 12.5 5 Q7 10.5 1.5 5 Z" fill="none" stroke="#6e6e6e" stroke-width="1.3"/><circle cx="7" cy="5" r="2.4" fill="#6e6e6e"/><circle cx="7" cy="5" r="0.9" fill="#555"/></svg>
<svg class="a" style="left:657px;top:308px" width="14" height="10" viewBox="0 0 14 10"><path d="M1.5 5 Q7 -0.5 12.5 5 Q7 10.5 1.5 5 Z" fill="none" stroke="#6e6e6e" stroke-width="1.3"/><circle cx="7" cy="5" r="2.4" fill="#6e6e6e"/><circle cx="7" cy="5" r="0.9" fill="#555"/></svg>
<svg class="a" style="left:657px;top:329px" width="14" height="10" viewBox="0 0 14 10"><path d="M1.5 5 Q7 -0.5 12.5 5 Q7 10.5 1.5 5 Z" fill="none" stroke="#6e6e6e" stroke-width="1.3"/><circle cx="7" cy="5" r="2.4" fill="#6e6e6e"/><circle cx="7" cy="5" r="0.9" fill="#555"/></svg>
<svg class="a" style="left:681px;top:245px" width="9" height="6" viewBox="0 0 9 6"><path d="M1 1L4.5 4.5L8 1" fill="none" stroke="#d0d0d0" stroke-width="1.3"/></svg>
<svg class="a" style="left:681px;top:288px" width="9" height="6" viewBox="0 0 9 6"><path d="M1 1L4.5 4.5L8 1" fill="none" stroke="#d0d0d0" stroke-width="1.3"/></svg>
<div class="t" style="left:698px;top:241px;font-size:10px;line-height:12px;color:#dcdcdc;letter-spacing:0.22px">線 :</div>
<div class="t" style="left:698px;top:284px;font-size:10px;line-height:12px;color:#dcdcdc;letter-spacing:-0.19px">塗り :</div>
<div class="a" style="left:757px;top:240px;width:14px;height:14px;background:#000;border:2px solid #d0d0d0;outline:1px solid #666"></div>
<div class="t" style="left:785px;top:240px;font-size:12px;line-height:14px;color:#e0e0e0;letter-spacing:-0.18px">10 pt</div>
<div class="a" style="left:757px;top:283px;width:14px;height:14px;background:#0a9a3a;border:2px solid #d0d0d0;outline:1px solid #666"></div>
<div class="t" style="left:717px;top:264px;font-size:10px;line-height:12px;color:#dcdcdc;letter-spacing:0.69px">不透明度 :</div>
<div class="a" style="left:717px;top:275px;width:49px;height:1px;border-top:1px dotted #9a9a9a"></div>
<div class="t" style="left:789px;top:264px;font-size:10px;line-height:12px;color:#dcdcdc;letter-spacing:0.33px">初期設定</div>
<div class="t" style="left:717px;top:307px;font-size:10px;line-height:12px;color:#dcdcdc;letter-spacing:0.69px">不透明度 :</div>
<div class="a" style="left:717px;top:318px;width:49px;height:1px;border-top:1px dotted #9a9a9a"></div>
<div class="t" style="left:789px;top:307px;font-size:10px;line-height:12px;color:#dcdcdc;letter-spacing:0.33px">初期設定</div>
<div class="t" style="left:698px;top:329px;font-size:10px;line-height:12px;color:#dcdcdc;letter-spacing:0.69px">不透明度 :</div>
<div class="a" style="left:698px;top:340px;width:49px;height:1px;border-top:1px dotted #9a9a9a"></div>
<div class="t" style="left:770px;top:329px;font-size:10px;line-height:12px;color:#dcdcdc;letter-spacing:0.33px">初期設定</div>
<div class="a" style="left:660px;top:456px;width:10px;height:10px;border:2px solid #d0d0d0"></div>
<div class="a" style="left:682px;top:456px;width:10px;height:10px;border:1px solid #c8c8c8;background:#9a9a9a;outline:1px solid #777;outline-offset:-3px"></div>
<div class="t" style="left:704px;top:453px;font-size:13px;line-height:15px;color:#c8c8c8;font-style:italic;font-family:"Liberation Serif",serif">fx.</div>
<svg class="a" style="left:947px;top:455px" width="12" height="12" viewBox="0 0 12 12"><circle cx="6" cy="6" r="4.6" fill="none" stroke="#d8d8d8" stroke-width="1.6"/><path d="M3 3L9 9" stroke="#d8d8d8" stroke-width="1.6"/></svg>
<svg class="a" style="left:970px;top:455px" width="11" height="11" viewBox="0 0 11 11"><rect x="0.5" y="0.5" width="10" height="10" fill="none" stroke="#6c6c6c"/><path d="M5.5 3V8M3 5.5H8" stroke="#6c6c6c"/></svg>
<svg class="a" style="left:993px;top:455px" width="10" height="11" viewBox="0 0 10 11"><path d="M0.5 2.5H9.5M3.5 2.5V0.8H6.5V2.5M1.5 2.5L2 10.5H8L8.5 2.5M4 4.5V8.5M6 4.5V8.5" fill="none" stroke="#6c6c6c" stroke-width="1"/></svg>
<div class="a" style="left:654px;top:214px;width:366px;height:238px;border:1px solid #5a5a5a;border-top-color:#4a4a4a"></div>
<div class="a" style="left:650px;top:470px;width:374px;height:25px;background:#424242"></div>
<div class="a" style="left:650px;top:470px;width:33px;height:25px;background:#444444;border-right:1px solid #3a3a3a"></div>
<div class="t" style="left:658px;top:478px;font-size:10px;line-height:12px;color:#bdbdbd">線</div>
<div class="a" style="left:683px;top:470px;width:35px;height:25px;background:#444444;border-right:1px solid #3a3a3a"></div>
<div class="t" style="left:692px;top:478px;font-size:10px;line-height:12px;color:#bdbdbd;letter-spacing:-1.00px">文字</div>
<div class="a" style="left:718px;top:470px;width:34px;height:25px;background:#444444;border-right:1px solid #3a3a3a"></div>
<div class="t" style="left:727px;top:478px;font-size:10px;line-height:12px;color:#bdbdbd;letter-spacing:-1.00px">段落</div>
<div class="a" style="left:752px;top:470px;width:64px;height:25px;background:#444444;border-right:1px solid #3a3a3a"></div>
<div class="t" style="left:761px;top:478px;font-size:10px;line-height:12px;color:#bdbdbd;letter-spacing:0.12px">OpenType</div>
<div class="a" style="left:816px;top:470px;width:109px;height:25px;background:#535353;border-right:1px solid #3a3a3a"></div>
<div class="t" style="left:824px;top:478px;font-size:10px;line-height:12px;color:#f0f0f0;letter-spacing:-0.78px">グラフィックスタイル</div>
<svg class="a" style="left:1012px;top:478px" width="10" height="8" viewBox="0 0 10 8"><path d="M0 1H10M0 4H10M0 7H10" stroke="#c8c8c8" stroke-width="1.2"/></svg>
<div class="a" style="left:654px;top:497px;width:368px;height:145px;border:1px solid #4b4b4b"></div>
<div class="a" style="left:655.0px;top:500px;width:27.5px;height:28px;background:#e4e4e4"></div>
<div class="a" style="left:683.5px;top:500px;width:27.5px;height:28px;background:#e4e4e4"></div>
<div class="a" style="left:712.0px;top:500px;width:27.5px;height:28px;background:#e4e4e4"></div>
<div class="a" style="left:740.5px;top:500px;width:27.5px;height:28px;background:#e4e4e4"></div>
<div class="a" style="left:769.0px;top:500px;width:27.5px;height:28px;background:#e4e4e4"></div>
<div class="a" style="left:797.5px;top:500px;width:27.5px;height:28px;background:#e4e4e4"></div>
<div class="a" style="left:826.0px;top:500px;width:27.5px;height:28px;background:#e4e4e4"></div>
<div class="a" style="left:854.5px;top:500px;width:27.5px;height:28px;background:#e4e4e4"></div>
<div class="a" style="left:883.0px;top:500px;width:27.5px;height:28px;background:#e4e4e4"></div>
<div class="a" style="left:658px;top:503px;width:22px;height:21px;background:#fff;border:1px solid #999"></div>
<div class="a" style="left:657px;top:514px;width:8px;height:8px;background:#fff;border:1px solid #000"></div><div class="a" style="left:660px;top:517px;width:7px;height:7px;background:#000"></div>
<div class="a" style="left:689px;top:506px;width:17px;height:16px;background:#fff;border:1px solid #999;box-shadow:1px 1px 1px #aaa"></div>
<svg class="a" style="left:686px;top:518px" width="8" height="8" viewBox="0 0 8 8"><rect x="0.5" y="0.5" width="7" height="7" fill="#fff" stroke="#c03030"/><path d="M1 7L7 1" stroke="#e02020" stroke-width="1.2"/></svg>
<div class="a" style="left:715px;top:503px;width:21px;height:21px;background:#fff;border:1px solid #888"></div>
<div class="a" style="left:744px;top:509px;width:11px;height:12px;background:#fff;border:1px solid #aaa"></div><div class="a" style="left:754px;top:506px;width:12px;height:12px;background:#fff;border:1px solid #999"></div>
<svg class="a" style="left:743px;top:518px" width="8" height="8" viewBox="0 0 8 8"><rect x="0.5" y="0.5" width="7" height="7" fill="#fff" stroke="#c03030"/><path d="M1 7L7 1" stroke="#e02020" stroke-width="1.2"/></svg>
<div class="a" style="left:773px;top:504px;width:20px;height:20px;background:radial-gradient(circle at 60% 40%,#f0f0f0,#b0b0b0 70%,#8a8a8a);filter:blur(0.8px)"></div>
<div class="a" style="left:801px;top:503px;width:21px;height:21px;background:radial-gradient(circle at 50% 15%,#d8ecff,#5aa0e8 55%,#2060b8);border:1px solid #888"></div>
<svg class="a" style="left:829px;top:503px" width="21" height="21" viewBox="0 0 21 21"><rect width="21" height="21" fill="#f0c000"/><path d="M0 4Q6 2 9 8T21 12V21H14Q12 14 6 15T0 12Z" fill="#2aa020"/><path d="M0 0H8Q5 4 0 5Z M12 0Q15 6 21 5V0Z" fill="#60c030"/><path d="M3 10Q8 9 10 13T16 20" fill="none" stroke="#f8e040" stroke-width="2"/></svg>
<svg class="a" style="left:857px;top:503px" width="21" height="21" viewBox="0 0 21 21"><rect width="21" height="21" fill="#3a4a4a"/><path d="M4 21Q2 12 8 9Q14 7 12 3Q17 3 17 8Q16 13 9 13Q6 15 8 21Z" fill="#30a0d8"/><path d="M14 21Q15 16 21 16" stroke="#30a0d8" stroke-width="2.5" fill="none"/></svg>
<div class="a" style="left:886px;top:506px;width:16px;height:16px;background:#f4f070;border-radius:50%;filter:blur(1.5px)"></div><div class="a" style="left:891px;top:510px;width:8px;height:8px;background:#dcd860;border:1px solid #c8c030"></div>
<div class="t" style="left:659px;top:644px;font-size:10px;line-height:12px;color:#c8c8c8;font-weight:bold">II\.</div>
<svg class="a" style="left:972px;top:644px" width="11" height="11" viewBox="0 0 11 11"><rect x="0.5" y="0.5" width="10" height="10" fill="none" stroke="#d0d0d0"/><path d="M5.5 3V8M3 5.5H8" stroke="#d0d0d0"/></svg>
<svg class="a" style="left:993px;top:644px" width="10" height="11" viewBox="0 0 10 11"><path d="M0.5 2.5H9.5M3.5 2.5V0.8H6.5V2.5M1.5 2.5L2 10.5H8L8.5 2.5M4 4.5V8.5M6 4.5V8.5" fill="none" stroke="#6c6c6c" stroke-width="1"/></svg>
<svg class="a" style="left:946px;top:644px" width="14" height="11" viewBox="0 0 14 11"><path d="M5 3H3Q0.5 3 0.5 5.5Q0.5 8 3 8H5M9 3H11Q13.5 3 13.5 5.5Q13.5 8 11 8H9M2 1L12 10" fill="none" stroke="#6c6c6c" stroke-width="1.1"/></svg>
<svg class="a" style="left:0;top:0" width="1024" height="657" viewBox="0 0 1024 657"><g font-family="Liberation Sans" font-size="30" fill="#fff" stroke="#fff" stroke-width="13.5" stroke-linejoin="round"><text x="483" y="157" letter-spacing="2.15">グラフィックスタイルを適用したい</text><text x="483" y="201" letter-spacing="2.5">オブジェクトを選ぶ</text></g><g font-family="Liberation Sans" font-size="30" fill="#f7505c" stroke="#f7505c" stroke-width="3.8" stroke-linejoin="round"><text x="483" y="157" letter-spacing="2.15">グラフィックスタイルを適用したい</text><text x="483" y="201" letter-spacing="2.5">オブジェクトを選ぶ</text></g></svg>
</body></html>
